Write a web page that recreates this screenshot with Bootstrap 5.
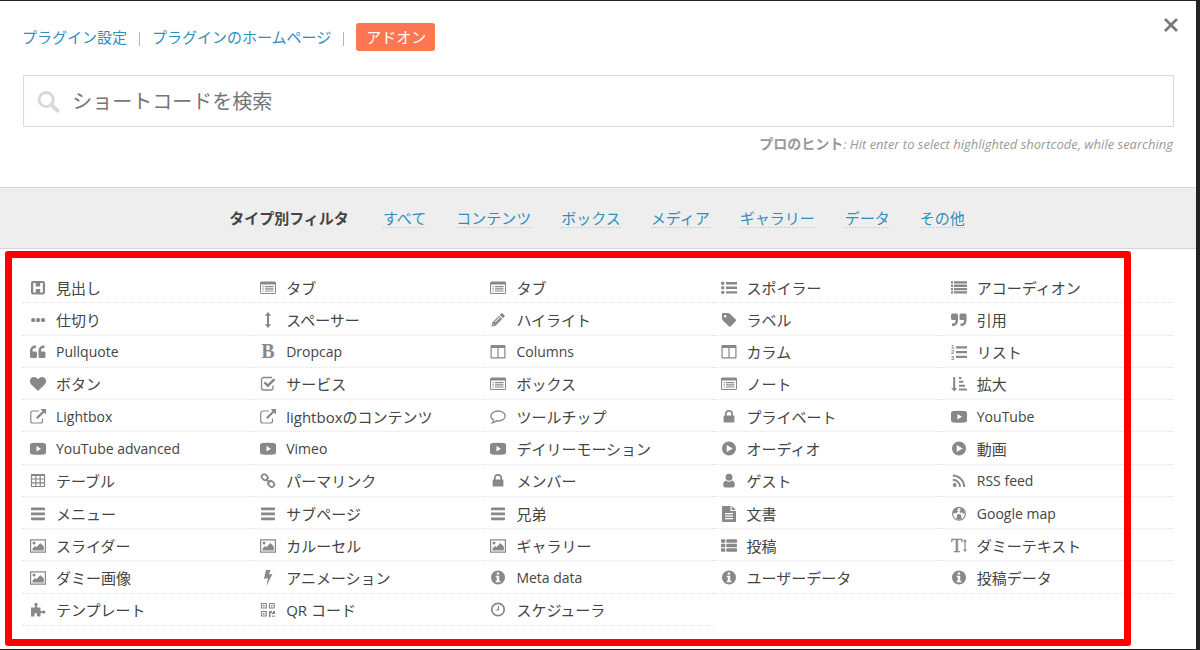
<!DOCTYPE html>
<html lang="ja">
<head>
<meta charset="utf-8">
<meta name="viewport" content="width=device-width, initial-scale=1">
<title>ショートコードを検索</title>
<link rel="stylesheet" href="https://cdn.jsdelivr.net/npm/bootstrap@5.3.0/dist/css/bootstrap.min.css">
<style>
  body { background: #232323; color: #444; font-family: "Open Sans", "Noto Sans CJK JP", sans-serif; font-size: 15px; line-height: 24px; }
  a { color: #2e8fbf; text-decoration: none; }
  .generator { background: #fff; margin: 1px 4px 1px 0; min-height: calc(100vh - 2px); }
  .generator-head { padding: 22px 22px 33px; }
  .top-links { gap: 12px; line-height: 28px; margin-bottom: 24px; }
  .divider { width: 1px; height: 14px; background: #b5b5b5; margin-top: 3px; }
  .btn-addon { background: #ff7752; color: #fff; border-radius: 3px; padding: 0 9px 0 10px; }
  .btn-dismiss { top: 16px; right: 17px; width: 16px; height: 16px; color: #777; }
  .search-box { border: 1px solid #dcdcdc; box-shadow: inset 0 0 1px #ddd; height: 52px; margin-left: 1px; padding: 1px 13px 0; gap: 12px; color: #d8d8d8; }
  .search-box input { font-size: 20px; color: #444; box-shadow: none !important; }
  .search-box input::placeholder { color: #757575; opacity: 1; }
  .hint { font-size: 13px; color: #999; line-height: 20px; margin: 7px 1px 0 0; }
  .hint b { font-style: normal; font-size: 14px; }
  .filters { background: #eee; border-top: 1px solid #d5d5d5; border-bottom: 1px solid #d5d5d5; gap: 30px; padding: 19px 2px 19px 0; line-height: 22px; }
  .filters strong { margin-right: 4px; }
  .filters a { border-bottom: 1px dotted #c8c8c8; line-height: 18px; }
  .choices { padding: 22px 23px 23px 22px; }
  .choice-grid { display: grid; grid-template-columns: repeat(5, 1fr); grid-auto-rows: 1fr; }
  .choice { display: flex; align-items: center; gap: 10px; padding: 2px 8px 0; border-bottom: 1px dotted #e2e2e2; color: #444; white-space: nowrap; min-height: 30px; }
  .choice:lang(en) { font-size: 14px; }
  .choice svg { width: 16px; height: 16px; flex: none; color: #888; fill: currentColor; }
  .frame { inset: 2px 65px 3px 5px; border: 7px solid #f00; border-radius: 3px; pointer-events: none; }
</style>
</head>
<body>
<svg class="d-none" aria-hidden="true">
  <symbol id="head" viewBox="0 0 16 16"><path fill-rule="evenodd" d="M3 1h10A2 2 0 0 1 15 3v9.500a2 2 0 0 1-2 2H3a2 2 0 0 1-2-2V3A2 2 0 0 1 3 1zM3.200 3v9.500h2.600V9h4.400v3.500h2.600V3h-2.600v3.500H5.800V3z"/></symbol>
  <symbol id="window" viewBox="0 0 16 16"><path fill-rule="evenodd" d="M1.500 1.500h13A1.500 1.500 0 0 1 16 3v9.500a1.500 1.500 0 0 1-1.500 1.500h-13A1.500 1.500 0 0 1 0 12.500V3a1.500 1.500 0 0 1 1.500-1.500zM1 4.500V12.500c0 .4.100.5.500.5h13c.4 0 .5-.1.500-.5V4.500z"/><path d="M2.500 6h1.200v1.200H2.500zM5 6h8.500v1.200H5zM2.500 8.200h1.200v1.200H2.500zM5 8.200h8.500v1.200H5zM2.500 10.400h1.200v1.200H2.500zM5 10.400h8.500v1.200H5z"/></symbol>
  <symbol id="bullets" viewBox="0 0 16 16"><path d="M5 2h11v2.400H5zM5 6.600h11V9H5zM5 11.200h11v2.400H5z"/><circle cx="1.700" cy="3.200" r="1.700"/><circle cx="1.700" cy="7.800" r="1.700"/><circle cx="1.700" cy="12.400" r="1.700"/></symbol>
  <symbol id="lines" viewBox="0 0 16 16"><path d="M0 1.300h2v2.300H0zM3 1.300h13v2.300H3zM0 4.600h2v2.300H0zM3 4.600h13v2.300H3zM0 7.900h2v2.300H0zM3 7.900h13v2.300H3zM0 11.200h2v2.300H0zM3 11.200h13v2.300H3z"/></symbol>
  <symbol id="dots" viewBox="0 0 16 16"><rect x="1.200" y="6" width="4" height="4" rx="1.500"/><rect x="6.100" y="6" width="4" height="4" rx="1.500"/><rect x="11" y="6" width="4" height="4" rx="1.500"/></symbol>
  <symbol id="updown" viewBox="0 0 16 16"><path d="M8 0l3.200 3.800H9v8.400h2.200L8 16l-3.200-3.800H7V3.800H4.800z"/></symbol>
  <symbol id="pencil" viewBox="0 0 16 16"><path fill-rule="evenodd" d="M1.500 14.500l.8-4L9 3.800l3.200 3.200-6.700 6.700zM9.800 3l1.400-1.400c.5-.5 1-.5 1.500 0l1.700 1.700c.5.500.5 1 0 1.500L13 6.200zM2.900 11.600l-.2.800.5.600.8-.2zM4.600 9.900l.6.600L10 5.700l-.6-.6z"/></symbol>
  <symbol id="tag" viewBox="0 0 16 16"><path fill-rule="evenodd" d="M1 2.200C1 1.500 1.500 1 2.200 1H7c.8 0 1.600.4 2.200 1l5.400 5.200c.6.600.6 1.400 0 2l-4.700 5c-.6.600-1.400.6-2 0L2 8.700C1.400 8 1 7.200 1 6.500zM4.200 2.900a1.300 1.300 0 1 0 0 2.600 1.300 1.300 0 0 0 0-2.600z"/></symbol>
  <symbol id="quote-r" viewBox="0 0 16 16"><path d="M1.500 1.500h4A1.500 1.500 0 0 1 7 3v5.500C7 11.500 5 14 2 14H1v-2.500h1c1.500 0 2.500-1 2.500-2.500V8h-3A1.500 1.500 0 0 1 0 6.500V3a1.500 1.500 0 0 1 1.500-1.500zM10 1.500h4A1.500 1.500 0 0 1 15.500 3v5.500c0 3-2 5.500-5 5.500h-1v-2.500h1c1.500 0 2.500-1 2.500-2.500V8h-3a1.500 1.500 0 0 1-1.500-1.500V3A1.500 1.500 0 0 1 10 1.500z"/></symbol>
  <symbol id="quote-l" viewBox="0 0 16 16"><path d="M5.500 14h-4A1.500 1.500 0 0 1 0 12.500V7c0-3 2-5.500 5-5.500h1V4H5C3.500 4 2.500 5 2.500 6.500v1h3A1.500 1.500 0 0 1 7 9v3.500A1.500 1.500 0 0 1 5.500 14zM14 14h-4a1.500 1.500 0 0 1-1.500-1.500V7c0-3 2-5.500 5-5.500h1V4h-1C12 4 11 5 11 6.500v1h3A1.500 1.500 0 0 1 15.500 9v3.500A1.500 1.500 0 0 1 14 14z"/></symbol>
  <symbol id="bold" viewBox="0 0 16 16"><text x="8" y="14" text-anchor="middle" font-family="Liberation Serif, serif" font-weight="700" font-size="20">B</text></symbol>
  <symbol id="columns" viewBox="0 0 16 16"><path fill-rule="evenodd" d="M1.500 1h13c.6 0 1 .4 1 1v11.500c0 .6-.4 1-1 1h-13c-.6 0-1-.4-1-1V2c0-.6.400-1 1-1zM1.700 4v9.300h5.700V4zM8.600 4v9.300h5.700V4z"/></symbol>
  <symbol id="numbers" viewBox="0 0 16 16"><path d="M5 2.200h11v2.300H5zM5 7h11v2.300H5zM5 11.800h11v2.300H5z"/><g font-family="Liberation Sans, sans-serif" font-weight="700" font-size="6"><text x="0" y="5">1</text><text x="0" y="10">2</text><text x="0" y="15.500">3</text></g></symbol>
  <symbol id="heart" viewBox="0 0 16 16"><path d="M8 15L1.300 8.400C-1.500 5.400.2 1 4 1c2 0 3.200 1.100 4 2.200C8.800 2.100 10 1 12 1c3.800 0 5.500 4.400 2.700 7.400z"/></symbol>
  <symbol id="check" viewBox="0 0 16 16"><path d="M12 1.500H3.500a2 2 0 0 0-2 2V12a2 2 0 0 0 2 2H11a2 2 0 0 0 2-2V9.500" fill="none" stroke="currentColor" stroke-width="1.300"/><path d="M3.500 7l1.700-1.600 2.600 2.500 5.800-5.700 1.800 1.700-7.600 7.500z"/></symbol>
  <symbol id="sort" viewBox="0 0 16 16"><path d="M2.200 1h2v11h2L3.200 15.500.2 12h2zM8 1h2.500v2H8zM8 4.800h4.300v2H8zM8 8.700h6v2H8zM8 12.600h8v2H8z"/></symbol>
  <symbol id="external" viewBox="0 0 16 16"><path d="M9 2H2.800a2 2 0 0 0-2 2v8a2 2 0 0 0 2 2h7.700a2 2 0 0 0 2-2V9.500" fill="none" stroke="currentColor" stroke-width="1.200"/><path d="M10.500 0H16v5.500l-1.900-1.900-6.500 6.500L6 8.500 12.500 2z"/></symbol>
  <symbol id="bubble" viewBox="0 0 16 16"><path d="M8 2C4.200 2 .9 4.100.9 7c0 1.700 1.100 3.100 2.800 4-.2 1.200-.7 2.100-1.600 2.900 1.900-.2 3.400-1 4.500-2.100L8 12c4 0 7.200-2.200 7.200-5S12 2 8 2z" fill="none" stroke="currentColor" stroke-width="1.300"/></symbol>
  <symbol id="lock" viewBox="0 0 16 16"><path fill-rule="evenodd" d="M4 6.500V5a4 4 0 0 1 8 0v1.500h.4c.6 0 1 .4 1 1v5c0 .6-.4 1-1 1H3.600c-.6 0-1-.4-1-1v-5c0-.6.400-1 1-1zM5.700 6.500h4.600V5a2.300 2.300 0 0 0-4.600 0z"/></symbol>
  <symbol id="video" viewBox="0 0 16 16"><path fill-rule="evenodd" d="M2.500 2Q8 1.500 13.500 2 16 2 16 4.500v6.500Q16 13.500 13.500 13.500 8 14 2.500 13.500 0 13.500 0 11V4.500Q0 2 2.500 2zM6.500 5v5.500L11 7.700z"/></symbol>
  <symbol id="play" viewBox="0 0 16 16"><path fill-rule="evenodd" d="M8 .5a7 7 0 1 1 0 14 7 7 0 0 1 0-14zM5.700 4v7l6-3.500z"/></symbol>
  <symbol id="grid" viewBox="0 0 16 16"><path d="M1.500 1.500h13v12h-13zM1 2.500h14M1 6h14M1 9.800h14M5.800 2v12M10.200 2v12" fill="none" stroke="currentColor" stroke-width="1.200"/></symbol>
  <symbol id="chain" viewBox="0 0 16 16"><g fill="none" stroke="currentColor" stroke-width="1.800"><rect x="1.500" y="1.700" width="6.500" height="5" rx="2.300" transform="rotate(45 4.700 4.200)"/><rect x="8" y="8.500" width="6.500" height="5" rx="2.300" transform="rotate(45 11.200 11)"/><path d="M6 6l4 4"/></g></symbol>
  <symbol id="person" viewBox="0 0 16 16"><circle cx="8" cy="4.300" r="3.500"/><path d="M4.700 7.500Q8 10 11.300 7.500 14 8.500 13.800 12.500q-.2 2-2 2H4.200q-1.800 0-2-2Q2 8.500 4.700 7.500z"/></symbol>
  <symbol id="feed" viewBox="0 0 16 16"><circle cx="3.700" cy="12" r="1.900"/><path d="M1.800 6.700a7.200 7.200 0 0 1 7.200 7.200M1.800 2.500A11.400 11.400 0 0 1 13.200 13.900" fill="none" stroke="currentColor" stroke-width="1.900"/></symbol>
  <symbol id="menu" viewBox="0 0 16 16"><rect x="1" y="1.600" width="14" height="2.600" rx=".6"/><rect x="1" y="6.600" width="14" height="2.600" rx=".6"/><rect x="1" y="11.600" width="14" height="2.600" rx=".6"/></symbol>
  <symbol id="doc" viewBox="0 0 16 16"><path fill-rule="evenodd" d="M2 0h7.500v5H15v10c0 .6-.4 1-1 1H2c-.6 0-1-.4-1-1V1c0-.6.400-1 1-1zM10.700 0L15 4h-4.300zM4 7v1.200h8V7zM4 9.500v1.200h8V9.500zM4 12v1.200h8V12z"/></symbol>
  <symbol id="globe" viewBox="0 0 16 16"><circle cx="8" cy="7.800" r="6.400" fill="none" stroke="currentColor" stroke-width="1.200"/><path d="M3 4l3-2 1.500.8L6 4.500l1.300 1L5.500 7 2 7.500zM8.500 2.500l3.500.5 2 4-2 .8-1-1.600-2 .8-.5-1.800 1.200-1zM6.500 8l3 .2.800 2 .5 3.300H5.500l.3-3.300z"/></symbol>
  <symbol id="image" viewBox="0 0 16 16"><path d="M.6 1.800h14.800v12.400H.6z" fill="none" stroke="currentColor" stroke-width="1.200"/><circle cx="4" cy="5" r="1.500"/><path d="M2.500 12.400v-2L5 8l1.500 1.300L10.300 5l3.500 3.600v3.800z"/></symbol>
  <symbol id="thlist" viewBox="0 0 16 16"><rect y="1.300" width="4.300" height="3.500" rx=".7"/><rect x="5.300" y="1.300" width="10.700" height="3.500" rx=".7"/><rect y="5.800" width="4.300" height="3.500" rx=".7"/><rect x="5.300" y="5.800" width="10.700" height="3.500" rx=".7"/><rect y="10.300" width="4.300" height="3.500" rx=".7"/><rect x="5.300" y="10.300" width="10.700" height="3.500" rx=".7"/></symbol>
  <symbol id="textsize" viewBox="0 0 16 16"><text x="0" y="14" font-family="Liberation Serif, serif" font-size="19" stroke="currentColor" stroke-width=".4">T</text><path d="M14 1l2 2.500h-1.400v8H16L14 14l-2-2.500h1.400v-8H12z"/></symbol>
  <symbol id="bolt" viewBox="0 0 16 16"><path d="M6 0h4.500L8.800 4.500l3.700-.8L6.500 16l1.400-8-4 1z"/></symbol>
  <symbol id="info" viewBox="0 0 16 16"><path fill-rule="evenodd" d="M8 .5a7 7 0 1 1 0 14 7 7 0 0 1 0-14zM6.800 2.500v2h2.400v-2zM5.700 5.800v1.400h1.100v3.600H5.700v1.500h4.600v-1.500H9.200v-5z"/></symbol>
  <symbol id="puzzle" viewBox="0 0 16 16"><path d="M1 5.500h3.500Q5.500 5.500 5 4 4 3 4.500 1.500 6 0 7.500 1.500 8 3 7 4q-.5 1.500.5 1.500h3v3q0 1 1.500.500 3-1.500 3.500 1 0 2.500-3.500 1-1.500-.5-1.500.5v3H7.500q-.8 0-.5-1.500Q7 11 5.700 11q-1.500 0-1.200 2 .3 1.500-.5 1.500H1z"/></symbol>
  <symbol id="qr" viewBox="0 0 16 16"><path d="M1.500 1.500H6.200V6H1.500zM9.500 1.500H14.200V6H9.500zM1.500 9.500H6.200V14H1.500z" fill="none" stroke="currentColor" stroke-width="1.200"/><path d="M3 3h1.500v1.500H3zM11 3h1.500v1.500H11zM3 11h1.500v1.500H3zM9 9h3v1.400h1V9h2v3h-3v-1h-1.400v4H9zM12 13.500h1.200V15H12zM14 13.500h1V15h-1z"/></symbol>
  <symbol id="clock" viewBox="0 0 16 16"><circle cx="8" cy="7.500" r="6.200" fill="none" stroke="currentColor" stroke-width="1.700"/><path d="M8.500 4v4H5.500" fill="none" stroke="currentColor" stroke-width="1.200"/></symbol>
</svg>

<main class="generator d-flex flex-column position-relative">
  <button type="button" class="btn-dismiss btn p-0 border-0 position-absolute d-flex" aria-label="閉じる">
    <svg width="16" height="16" viewBox="0 0 16 16"><path d="M2 2l12 12M14 2L2 14" stroke="currentColor" stroke-width="2.600"/></svg>
  </button>
  <header class="generator-head">
    <nav class="top-links d-flex align-items-center">
      <a href="#">プラグイン設定</a><span class="divider"></span>
      <a href="#">プラグインのホームページ</a><span class="divider"></span>
      <a href="#" class="btn-addon">アドオン</a>
    </nav>
    <div class="search-box d-flex align-items-center">
      <svg width="24" height="24" viewBox="0 0 24 24" fill="none" stroke="currentColor"><circle cx="9.500" cy="9.500" r="7.300" stroke-width="3"/><path d="M15 15l6 6" stroke-width="4" stroke-linecap="round"/></svg>
      <input type="text" class="form-control border-0 p-0 bg-transparent" placeholder="ショートコードを検索" aria-label="ショートコードを検索">
    </div>
    <p class="hint text-end"><b>プロのヒント</b><i>: Hit enter to select highlighted shortcode, while searching</i></p>
  </header>
  <nav class="filters d-flex justify-content-center align-items-center">
    <strong>タイプ別フィルタ</strong>
    <a href="#">すべて</a><a href="#">コンテンツ</a><a href="#">ボックス</a><a href="#">メディア</a><a href="#">ギャラリー</a><a href="#">データ</a><a href="#">その他</a>
  </nav>
  <section class="choices position-relative flex-grow-1 d-flex flex-column">
    <div class="choice-grid flex-grow-1">
      <a href="#" class="choice"><svg><use href="#head"/></svg>見出し</a>
      <a href="#" class="choice"><svg><use href="#window"/></svg>タブ</a>
      <a href="#" class="choice"><svg><use href="#window"/></svg>タブ</a>
      <a href="#" class="choice"><svg><use href="#bullets"/></svg>スポイラー</a>
      <a href="#" class="choice"><svg><use href="#lines"/></svg>アコーディオン</a>
      <a href="#" class="choice"><svg><use href="#dots"/></svg>仕切り</a>
      <a href="#" class="choice"><svg><use href="#updown"/></svg>スペーサー</a>
      <a href="#" class="choice"><svg><use href="#pencil"/></svg>ハイライト</a>
      <a href="#" class="choice"><svg><use href="#tag"/></svg>ラベル</a>
      <a href="#" class="choice"><svg><use href="#quote-r"/></svg>引用</a>
      <a href="#" class="choice" lang="en"><svg><use href="#quote-l"/></svg>Pullquote</a>
      <a href="#" class="choice" lang="en"><svg><use href="#bold"/></svg>Dropcap</a>
      <a href="#" class="choice" lang="en"><svg><use href="#columns"/></svg>Columns</a>
      <a href="#" class="choice"><svg><use href="#columns"/></svg>カラム</a>
      <a href="#" class="choice"><svg><use href="#numbers"/></svg>リスト</a>
      <a href="#" class="choice"><svg><use href="#heart"/></svg>ボタン</a>
      <a href="#" class="choice"><svg><use href="#check"/></svg>サービス</a>
      <a href="#" class="choice"><svg><use href="#window"/></svg>ボックス</a>
      <a href="#" class="choice"><svg><use href="#window"/></svg>ノート</a>
      <a href="#" class="choice"><svg><use href="#sort"/></svg>拡大</a>
      <a href="#" class="choice" lang="en"><svg><use href="#external"/></svg>Lightbox</a>
      <a href="#" class="choice"><svg><use href="#external"/></svg>lightboxのコンテンツ</a>
      <a href="#" class="choice"><svg><use href="#bubble"/></svg>ツールチップ</a>
      <a href="#" class="choice"><svg><use href="#lock"/></svg>プライベート</a>
      <a href="#" class="choice" lang="en"><svg><use href="#video"/></svg>YouTube</a>
      <a href="#" class="choice" lang="en"><svg><use href="#video"/></svg>YouTube advanced</a>
      <a href="#" class="choice" lang="en"><svg><use href="#video"/></svg>Vimeo</a>
      <a href="#" class="choice"><svg><use href="#video"/></svg>デイリーモーション</a>
      <a href="#" class="choice"><svg><use href="#play"/></svg>オーディオ</a>
      <a href="#" class="choice"><svg><use href="#play"/></svg>動画</a>
      <a href="#" class="choice"><svg><use href="#grid"/></svg>テーブル</a>
      <a href="#" class="choice"><svg><use href="#chain"/></svg>パーマリンク</a>
      <a href="#" class="choice"><svg><use href="#lock"/></svg>メンバー</a>
      <a href="#" class="choice"><svg><use href="#person"/></svg>ゲスト</a>
      <a href="#" class="choice" lang="en"><svg><use href="#feed"/></svg>RSS feed</a>
      <a href="#" class="choice"><svg><use href="#menu"/></svg>メニュー</a>
      <a href="#" class="choice"><svg><use href="#menu"/></svg>サブページ</a>
      <a href="#" class="choice"><svg><use href="#menu"/></svg>兄弟</a>
      <a href="#" class="choice"><svg><use href="#doc"/></svg>文書</a>
      <a href="#" class="choice" lang="en"><svg><use href="#globe"/></svg>Google map</a>
      <a href="#" class="choice"><svg><use href="#image"/></svg>スライダー</a>
      <a href="#" class="choice"><svg><use href="#image"/></svg>カルーセル</a>
      <a href="#" class="choice"><svg><use href="#image"/></svg>ギャラリー</a>
      <a href="#" class="choice"><svg><use href="#thlist"/></svg>投稿</a>
      <a href="#" class="choice"><svg><use href="#textsize"/></svg>ダミーテキスト</a>
      <a href="#" class="choice"><svg><use href="#image"/></svg>ダミー画像</a>
      <a href="#" class="choice"><svg><use href="#bolt"/></svg>アニメーション</a>
      <a href="#" class="choice" lang="en"><svg><use href="#info"/></svg>Meta data</a>
      <a href="#" class="choice"><svg><use href="#info"/></svg>ユーザーデータ</a>
      <a href="#" class="choice"><svg><use href="#info"/></svg>投稿データ</a>
      <a href="#" class="choice"><svg><use href="#puzzle"/></svg>テンプレート</a>
      <a href="#" class="choice"><svg><use href="#qr"/></svg>QR コード</a>
      <a href="#" class="choice"><svg><use href="#clock"/></svg>スケジューラ</a>
    </div>
    <div class="frame position-absolute"></div>
  </section>
</main>
<script src="https://cdn.jsdelivr.net/npm/bootstrap@5.3.0/dist/js/bootstrap.bundle.min.js"></script>
</body>
</html>
